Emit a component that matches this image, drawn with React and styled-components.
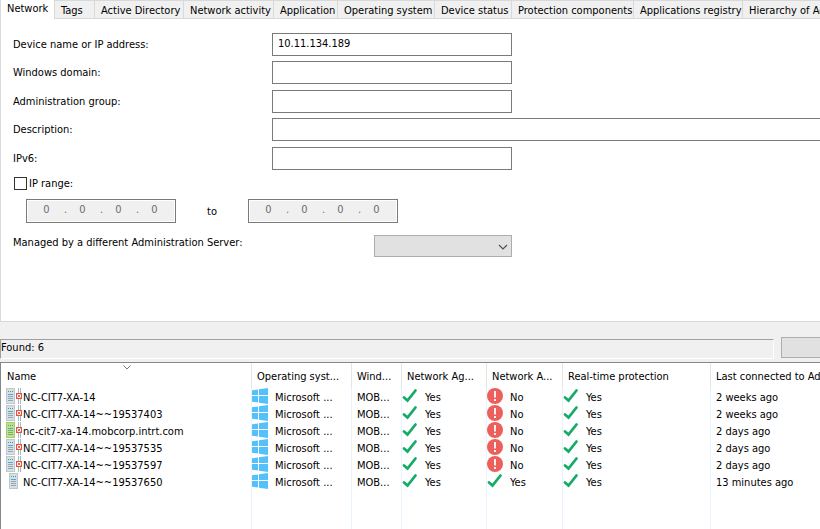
import styled, { createGlobalStyle } from "styled-components";
import { useState } from "react";

const TABS = [
    { name: "Network", width: 55 },
    { name: "Tags", width: 40 },
    { name: "Active Directory", width: 89 },
    { name: "Network activity", width: 90 },
    { name: "Application", width: 64 },
    { name: "Operating system", width: 97 },
    { name: "Device status", width: 77 },
    { name: "Protection components", width: 122 },
    { name: "Applications registry", width: 109 },
    { name: "Hierarchy of Administration Servers", width: 190 },
]

const FIELDS = [
    { id: "device", label: "Device name or IP address:", value: "10.11.134.189" },
    { id: "domain", label: "Windows domain:" },
    { id: "group", label: "Administration group:" },
    { id: "description", label: "Description:", wide: true },
    { id: "ipv6", label: "IPv6:" },
]

const COLUMNS = [
    { name: "Name", width: 251 },
    { name: "Operating syst...", width: 100 },
    { name: "Wind...", width: 50 },
    { name: "Network Ag...", width: 85 },
    { name: "Network A...", width: 76 },
    { name: "Real-time protection", width: 148 },
    { name: "Last connected to Administration Server" },
]

const DEVICES = [
    { name: "NC-CIT7-XA-14", kind: "offline", running: false, seen: "2 weeks ago" },
    { name: "NC-CIT7-XA-14~~19537403", kind: "offline", running: false, seen: "2 weeks ago" },
    { name: "nc-cit7-xa-14.mobcorp.intrt.com", kind: "green", running: false, seen: "2 days ago" },
    { name: "NC-CIT7-XA-14~~19537535", kind: "offline", running: false, seen: "2 days ago" },
    { name: "NC-CIT7-XA-14~~19537597", kind: "offline", running: false, seen: "2 days ago" },
    { name: "NC-CIT7-XA-14~~19537650", kind: "online", running: true, seen: "13 minutes ago" },
]

function ServerIcon({ kind }) {
    const x = kind === "online" ? 3 : 0
    const green = kind === "green"
    return (
        <svg width="16" height="16" viewBox="0 0 16 16" aria-hidden="true">
            {kind !== "online" &&
                <g>
                    <path d="M12.5 0v16M14.5 0v16" stroke="#9dbdcb" />
                    <rect x="10.5" y="5.5" width="5" height="5" fill="#fff" stroke="#e8503f" />
                    <path d="M11.5 6.5l3 3M14.5 6.5l-3 3" stroke="#ea6555" />
                </g>
            }
            <rect x={x + 0.5} y="0.5" width="8" height="15" fill={green ? "#bce18c" : "#d6dfe3"} stroke={green ? "#a2cd75" : "#bcc9cf"} />
            <rect x={x + 2} y="3" width="1" height="1" fill="#35b54a" />
            <rect x={x + 4} y="3" width="1" height="1" fill="#35b54a" />
            <rect x={x + 6} y="3" width="1" height="1" fill="#e8503f" />
            <rect x={x + 2} y="6" width="5" height="1" fill="#3aaef0" />
            <path d={`M${x + 2} 8.5h5M${x + 2} 10.5h5M${x + 2} 12.5h5`} stroke={green ? "#8aa873" : "#97a5ad"} />
        </svg>
    )
}

function WindowsIcon() {
    return (
        <svg width="16" height="16" viewBox="0 0 16 16" aria-hidden="true">
            <path fill="#55c1fb" d="M0 2.2L6 1.4V7H0zM7 1.2L16 0V7H7zM0 8H6V14.5L0 13.7zM7 8H16V16L7 14.7z" />
        </svg>
    )
}

function CheckIcon() {
    return (
        <svg width="16" height="16" viewBox="0 0 16 16" aria-hidden="true">
            <path d="M2 9.5L5.5 12.5L13.5 2.5" fill="none" stroke="#16ab67" strokeWidth="2.8" strokeLinecap="round" />
        </svg>
    )
}

function AlertIcon() {
    return (
        <svg width="16" height="16" viewBox="0 0 16 16" aria-hidden="true">
            <circle cx="8" cy="8" r="8" fill="#ec5f5b" />
            <path d="M8 3v6.5M8 11v2" stroke="#fff" strokeWidth="1.8" />
        </svg>
    )
}

function Status({ ok }) {
    return (
        <IconText>
            {ok ? <CheckIcon /> : <AlertIcon />}
            <span>{ok ? "Yes" : "No"}</span>
        </IconText>
    )
}

function IpAddress({ label }) {
    return (
        <IpBox role="group" aria-label={label}>
            {[1, 2, 3, 4].map((n) => (
                <Octet key={n}>
                    <input aria-label={`${label} ${n}`} defaultValue="0" disabled />
                    {n < 4 ? "." : null}
                </Octet>
            ))}
        </IpBox>
    )
}

export default function App() {
    const [tab, setTab] = useState("Network")

    return (
        <Page>
            <GlobalStyle />
            <TabBar role="tablist">
                {TABS.map((t) => (
                    <Tab key={t.name} role="tab" $width={t.width} aria-selected={t.name === tab} onClick={() => setTab(t.name)}>
                        {t.name}
                    </Tab>
                ))}
            </TabBar>
            <Panel>
                <Fields>
                    {FIELDS.map((f) => (
                        <Field key={f.id}>
                            <label htmlFor={f.id}>{f.label}</label>
                            <TextBox id={f.id} $wide={f.wide} defaultValue={f.value} />
                        </Field>
                    ))}
                </Fields>
                <CheckRow>
                    <input type="checkbox" id="range" />
                    <label htmlFor="range">IP range:</label>
                </CheckRow>
                <RangeRow>
                    <IpAddress label="From" />
                    <span>to</span>
                    <IpAddress label="To" />
                </RangeRow>
                <ServerRow>
                    <label htmlFor="server">Managed by a different Administration Server:</label>
                    <SelectBox>
                        <select id="server" disabled />
                        <svg width="10" height="6" viewBox="0 0 10 6" aria-hidden="true">
                            <path d="M1 1l4 4l4-4" fill="none" stroke="#505050" strokeWidth="1.2" />
                        </svg>
                    </SelectBox>
                </ServerRow>
            </Panel>
            <FoundRow>
                <Found>Found: 6</Found>
                <FindButton type="button" aria-label="Find now" />
            </FoundRow>
            <List>
                <Table>
                    <colgroup>
                        {COLUMNS.map((c) => <Column key={c.name} $width={c.width} />)}
                    </colgroup>
                    <thead>
                        <tr>
                            {COLUMNS.map((c, i) => (
                                <th key={c.name}>
                                    {c.name}
                                    {i === 0 &&
                                        <SortMark width="8" height="5" viewBox="0 0 8 5" aria-hidden="true">
                                            <path d="M0.5 0.5l3.5 3.5l3.5-3.5" fill="none" stroke="#777" />
                                        </SortMark>
                                    }
                                </th>
                            ))}
                        </tr>
                    </thead>
                    <tbody>
                        {DEVICES.map((d) => (
                            <tr key={d.name}>
                                <td>
                                    <DeviceName>
                                        <ServerIcon kind={d.kind} />
                                        <span>{d.name}</span>
                                    </DeviceName>
                                </td>
                                <td>
                                    <IconText>
                                        <WindowsIcon />
                                        <span>Microsoft ...</span>
                                    </IconText>
                                </td>
                                <TextCell>MOB...</TextCell>
                                <td><Status ok /></td>
                                <td><Status ok={d.running} /></td>
                                <td><Status ok /></td>
                                <TextCell>{d.seen}</TextCell>
                            </tr>
                        ))}
                        <FillerRow>
                            {COLUMNS.map((c) => <td key={c.name} />)}
                        </FillerRow>
                    </tbody>
                </Table>
            </List>
        </Page>
    )
}

const GlobalStyle = createGlobalStyle`
    * {
        box-sizing: border-box;
    }

    body {
        margin: 0;
        overflow: hidden;
    }

    body, button, input, select {
        font-family: "DejaVu Sans Condensed", "DejaVu Sans", Tahoma, sans-serif;
        font-size: 11px;
        line-height: 14px;
        color: #000;
    }
`

const Page = styled.div`
    height: 100vh;
    display: flex;
    flex-direction: column;
    background-color: #f0f0f0;
    overflow: hidden;
`

const TabBar = styled.div`
    display: flex;
    flex-shrink: 0;
    height: 19px;
    overflow: hidden;
`

const Tab = styled.button`
    flex: none;
    width: ${(props) => props.$width}px;
    padding: 2px 0 0 6px;
    border: solid #d9d9d9;
    border-width: 1px 1px 1px 0;
    background-color: #f0f0f0;
    text-align: left;
    white-space: nowrap;

    &[aria-selected="true"]{
        padding: 0 0 2px 6px;
        border-width: 0 1px 0 1px;
        background-color: #fff;
    }
`

const Panel = styled.main`
    flex: none;
    padding: 14px 0 64px 12px;
    border: solid #d9d9d9;
    border-width: 0 0 1px 1px;
    background-color: #fff;
`

const Fields = styled.div`
    display: grid;
    grid-template-rows: 28px 29px 28px 29px 23px;
`

const Field = styled.div`
    display: grid;
    grid-template-columns: 259px 1fr;
    align-items: center;
    height: 23px;

    label{
        padding-top: 1px;
    }
`

const TextBox = styled.input`
    width: ${(props) => (props.$wide ? "100%" : "240px")};
    height: 23px;
    padding: 0 5px 3px;
    border: 1px solid #7a7a7a;
    border-right-width: ${(props) => (props.$wide ? 0 : 1)}px;
    background-color: #fff;
    outline: none;
`

const CheckRow = styled.div`
    display: flex;
    align-items: center;
    gap: 2px;
    margin: 6px 0 8px 1px;

    input{
        appearance: none;
        width: 13px;
        height: 13px;
        margin: 0;
        border: 1px solid #333;
        background-color: #fff;
    }

    label{
        padding-top: 1px;
    }

    input:checked{
        background-color: #333;
    }
`

const RangeRow = styled.div`
    display: flex;
    align-items: center;
    padding-left: 13px;

    > span{
        width: 72px;
        padding-top: 2px;
        text-align: center;
    }
`

const IpBox = styled.div`
    display: flex;
    width: 150px;
    height: 24px;
    padding: 0 2px;
    border: 1px solid #7a7a7a;
    background-color: #f0f0f0;
    box-shadow: inset 0 0 0 1px #fff;
    color: #6d6d6d;
`

const Octet = styled.span`
    display: flex;
    width: 36px;
    padding: 3px 0;

    input{
        width: 35px;
        height: 14px;
        padding: 0;
        border: 0;
        background: transparent;
        color: #6d6d6d;
        text-align: center;
    }
`

const ServerRow = styled.div`
    display: flex;
    justify-content: space-between;
    width: 499px;
    margin-top: 12px;

    label{
        padding-top: 1px;
    }
`

const SelectBox = styled.div`
    position: relative;

    select{
        display: block;
        appearance: none;
        width: 138px;
        height: 22px;
        border: 1px solid #adadad;
        border-radius: 0;
        background-color: #e1e1e1;
        opacity: 1;
    }

    svg{
        position: absolute;
        top: 9px;
        right: 4px;
    }
`

const FoundRow = styled.div`
    display: flex;
    flex: none;
    gap: 7px;
    padding: 15px 0 3px;
`

const Found = styled.div`
    flex: 1;
    height: 20px;
    margin-top: 2px;
    padding-top: 1px;
    border: 1px solid #fff;
    border-top-color: #a0a0a0;
    border-left-color: #a0a0a0;
`

const FindButton = styled.button`
    width: 39px;
    height: 21px;
    border: 1px solid #adadad;
    border-right: 0;
    background-color: #e1e1e1;
`

const List = styled.div`
    flex: 1;
    display: grid;
    min-height: 0;
    border: solid #828790;
    border-width: 1px 0 0 1px;
    background-color: #fff;
    overflow: hidden;
`

const Table = styled.table`
    width: 100%;
    height: 100%;
    table-layout: fixed;
    border-spacing: 0;

    th{
        position: relative;
        height: 25px;
        padding: 2px 0 0 5px;
        border-right: 1px solid #e5e5e5;
        font-weight: normal;
        text-align: left;
        white-space: nowrap;
        overflow: hidden;
    }

    th:first-child{
        padding-left: 6px;
    }

    td{
        height: 17px;
        padding: 0;
        border-right: 1px solid #e9f3fd;
        white-space: nowrap;
        overflow: hidden;
    }

    th:last-child, td:last-child{
        border-right: 0;
    }
`

const Column = styled.col`
    width: ${(props) => (props.$width ? `${props.$width}px` : "auto")};
`

const SortMark = styled.svg`
    position: absolute;
    top: 2px;
    left: calc(50% - 3px);
`

const TextCell = styled.td`
    && {
        padding: 2px 0 0 5px;
    }
`

const IconText = styled.div`
    display: flex;
    align-items: flex-start;
    gap: 7px;
    height: 17px;

    svg{
        flex: none;
    }

    span{
        padding-top: 3px;
    }
`

const DeviceName = styled(IconText)`
    gap: 1px;
    padding-left: 5px;
`

const FillerRow = styled.tr`
    height: 100%;

    td{
        height: auto;
    }
`
